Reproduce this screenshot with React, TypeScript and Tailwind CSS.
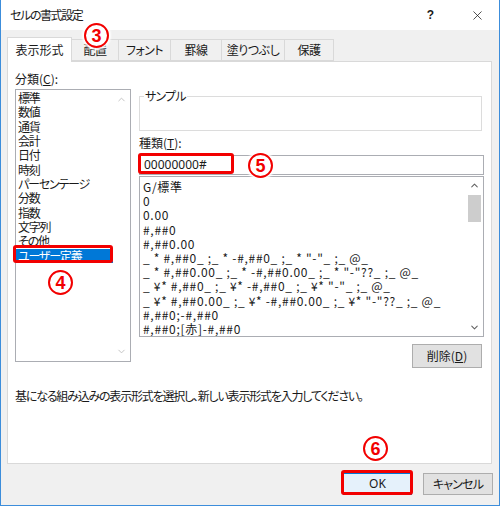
import { ChevronUp, ChevronDown, X } from "lucide-react";

const categories = [
  "標準",
  "数値",
  "通貨",
  "会計",
  "日付",
  "時刻",
  "パーセンテージ",
  "分数",
  "指数",
  "文字列",
  "その他",
  "ユーザー定義",
];

const formats = [
  "G/標準",
  "0",
  "0.00",
  "#,##0",
  "#,##0.00",
  '_ * #,##0_ ;_ * -#,##0_ ;_ * "-"_ ;_ @_',
  '_ * #,##0.00_ ;_ * -#,##0.00_ ;_ * "-"??_ ;_ @_',
  '_ ¥* #,##0_ ;_ ¥* -#,##0_ ;_ ¥* "-"_ ;_ @_',
  '_ ¥* #,##0.00_ ;_ ¥* -#,##0.00_ ;_ ¥* "-"??_ ;_ @_',
  "#,##0;-#,##0",
  "#,##0;[赤]-#,##0",
];

const tabs = [
  { label: "配置", w: "w-[47px]" },
  { label: "フォント", w: "w-[52px]" },
  { label: "罫線", w: "w-[51px]" },
  { label: "塗りつぶし", w: "w-[63px]" },
  { label: "保護", w: "w-[49px]" },
];

function Badge({ n, className }: { n: string; className: string }) {
  return (
    <div
      className={`absolute w-[25px] h-[25px] rounded-full border-2 border-[#f20000] bg-white text-[#f20000] flex items-center justify-center shadow-[0_0_2px_2px_rgba(255,255,255,0.95)] font-['Liberation_Sans',sans-serif] font-bold text-[18px] leading-none ${className}`}
    >
      {n}
    </div>
  );
}

export default function App() {
  return (
    <div className="relative w-[500px] h-[506px] bg-[#f0f0f0] border-x border-b border-[#3c8ddb] flex flex-col text-[12px] text-[#1a1a1a] font-['Noto_Sans_CJK_JP',sans-serif] [font-feature-settings:'palt']">
      {/* title bar */}
      <div className="h-[30px] bg-white flex items-center pl-[9px] pr-[14px]">
        <span className="text-[12px] tracking-[-1.4px]">セルの書式設定</span>
        <span className="ml-auto mr-[36px] font-['Liberation_Sans',sans-serif] font-bold text-[12px]">?</span>
        <X className="size-[15px]" strokeWidth={1.2} />
      </div>

      {/* tabs */}
      <div className="flex items-end pl-[6px] pt-[6px] h-[31px]">
        <div className="relative z-10 -mb-px w-[65px] h-[25px] bg-white border border-b-0 border-[#d9d9d9] flex items-center justify-center">
          表示形式
        </div>
        {tabs.map((t) => (
          <div
            key={t.label}
            className={`${t.w} h-[22px] border border-l-0 border-[#d9d9d9] flex items-center justify-center tracking-[-0.5px]`}
          >
            {t.label}
          </div>
        ))}
      </div>

      {/* panel */}
      <div className="ml-[6px] w-[485px] h-[403px] bg-white border border-[#d9d9d9]">
        <div className="flex">
          <div className="ml-[7px] w-[116px]">
            <div className="mt-[10px] h-[14px] leading-[14px]">
              分類(<span className="underline">C</span>):
            </div>
            <div className="mt-[3px] h-[273px] border border-[#abadb3] flex">
              <div className="flex-1 pt-px">
                {categories.map((c, i) => (
                  <div
                    key={c}
                    className={`h-[14.35px] leading-[14.35px] pl-[2px] whitespace-nowrap tracking-[-1.2px] ${
                      i === categories.length - 1 ? "bg-[#0078d7] text-white" : ""
                    }`}
                  >
                    {c}
                  </div>
                ))}
              </div>
              <div className="w-[17px] flex flex-col items-center justify-between py-[4px] text-[#bfbfbf]">
                <ChevronUp className="size-[11px]" strokeWidth={2} />
                <ChevronDown className="size-[11px]" strokeWidth={2} />
              </div>
            </div>
          </div>

          <div className="ml-[8px] w-[345px] flex flex-col">
            <div className="relative mt-[34px] w-[343px] h-[35px] border border-[#dcdcdc]">
              <span className="absolute -top-[8px] left-[4px] bg-white px-px leading-[14px] tracking-[-0.8px]">
                サンプル
              </span>
            </div>
            <div className="mt-[5px] h-[14px] leading-[14px]">
              種類(<span className="underline">T</span>):
            </div>
            <div className="mt-[5px] h-[20px] border border-[#abadb3] pl-[4px] leading-[18px] font-['Noto_Sans',sans-serif]">
              00000000#
            </div>
            <div className="mt-px h-[161px] border border-[#abadb3] flex">
              <div className="flex-1 pt-[3px] pl-[3px] tracking-[0.7px]">
                {formats.map((f) => (
                  <div key={f} className="h-[14.2px] leading-[14.2px] whitespace-pre">
                    {f}
                  </div>
                ))}
              </div>
              <div className="w-[17px] flex flex-col items-center pt-[3px] pb-[3px] text-[#606060]">
                <ChevronUp className="size-[11px]" strokeWidth={2.2} />
                <div className="mt-[4px] w-[13px] h-[27px] bg-[#cdcdcd]" />
                <ChevronDown className="size-[11px] mt-auto" strokeWidth={2.2} />
              </div>
            </div>
            <div className="mt-[7px] self-end mr-[2px] w-[70px] h-[24px] bg-[#e1e1e1] border border-[#adadad] flex items-center justify-center">
              削除(<span className="underline">D</span>)
            </div>
          </div>
        </div>
        <div className="ml-[7px] mt-[21px] h-[14px] leading-[14px] tracking-[-1.2px]">
          基になる組み込みの表示形式を選択し、新しい表示形式を入力してください。
        </div>
      </div>

      {/* footer buttons */}
      <div className="flex justify-end gap-[11px] pr-[6px] mt-[9px]">
        <div className="w-[69px] h-[22px] bg-[#e5f1fb] border border-[#0078d7] flex items-center justify-center font-['Noto_Sans',sans-serif]">
          OK
        </div>
        <div className="w-[70px] h-[22px] bg-[#e1e1e1] border border-[#adadad] flex items-center justify-center tracking-[-0.8px]">
          キャンセル
        </div>
      </div>

      {/* annotations */}
      <div className="absolute left-[6px] top-[37px] w-[65px] h-[25px] border-[3px] border-[#f20000] rounded-[3px]" />
      <div className="absolute left-[12px] top-[245px] w-[100px] h-[18px] border-[3px] border-[#f20000] rounded-[3px]" />
      <div className="absolute left-[137px] top-[153px] w-[96px] h-[21px] border-[3px] border-[#f20000] rounded-[3px]" />
      <div className="absolute left-[340px] top-[470px] w-[72px] h-[25px] border-[3px] border-[#f20000] rounded-[3px]" />
      <Badge n="3" className="left-[83px] top-[23px]" />
      <Badge n="4" className="left-[47px] top-[270px]" />
      <Badge n="5" className="left-[247px] top-[153px]" />
      <Badge n="6" className="left-[362px] top-[436px]" />
    </div>
  );
}
